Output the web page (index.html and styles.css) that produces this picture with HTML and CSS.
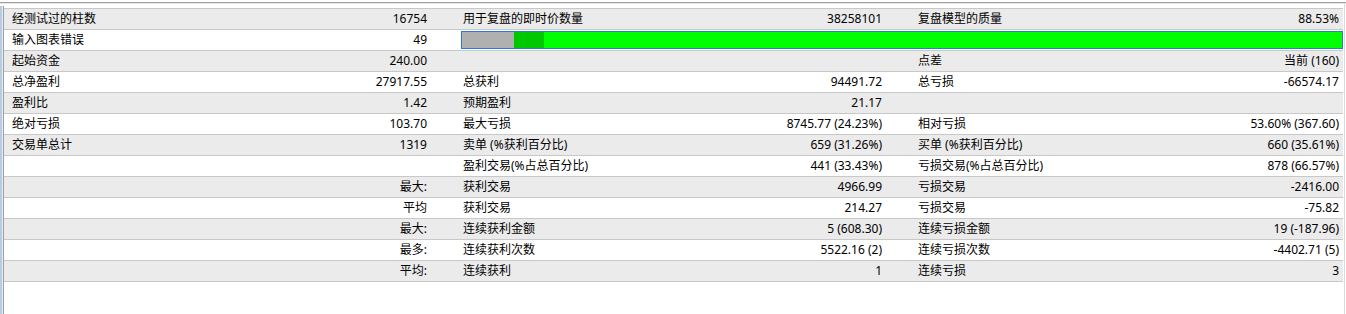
FILE: index.html
```html
<!DOCTYPE html>
<html lang="zh-CN">
<head>
<meta charset="utf-8">
<title>测试报告</title>
<link rel="stylesheet" href="styles.css">
</head>
<body>
<div class="top-rule"></div>
<div class="top-rule2"></div>
<div class="main">
  <div class="side"></div>
  <div class="content">
    <div class="report">
      <div class="row">
        <div class="lbl">经测试过的柱数</div><div class="val">16754</div>
        <div class="lbl mid">用于复盘的即时价数量</div><div class="val">38258101</div>
        <div class="lbl mid">复盘模型的质量</div><div class="val">88.53%</div>
      </div>
      <div class="row">
        <div class="lbl">输入图表错误</div><div class="val">49</div>
        <div class="barcell">
          <div class="bar"><div class="seg-gray"></div><div class="seg-dark"></div><div class="seg-bright"></div></div>
        </div>
      </div>
      <div class="row">
        <div class="lbl">起始资金</div><div class="val">240.00</div>
        <div class="lbl mid"></div><div class="val"></div>
        <div class="lbl mid">点差</div><div class="val">当前 (160)</div>
      </div>
      <div class="row">
        <div class="lbl">总净盈利</div><div class="val">27917.55</div>
        <div class="lbl mid">总获利</div><div class="val">94491.72</div>
        <div class="lbl mid">总亏损</div><div class="val">-66574.17</div>
      </div>
      <div class="row">
        <div class="lbl">盈利比</div><div class="val">1.42</div>
        <div class="lbl mid">预期盈利</div><div class="val">21.17</div>
        <div class="lbl mid"></div><div class="val"></div>
      </div>
      <div class="row">
        <div class="lbl">绝对亏损</div><div class="val">103.70</div>
        <div class="lbl mid">最大亏损</div><div class="val">8745.77 (24.23%)</div>
        <div class="lbl mid">相对亏损</div><div class="val">53.60% (367.60)</div>
      </div>
      <div class="row">
        <div class="lbl">交易单总计</div><div class="val">1319</div>
        <div class="lbl mid">卖单 (%获利百分比)</div><div class="val">659 (31.26%)</div>
        <div class="lbl mid">买单 (%获利百分比)</div><div class="val">660 (35.61%)</div>
      </div>
      <div class="row">
        <div class="lbl"></div><div class="val"></div>
        <div class="lbl mid">盈利交易(%占总百分比)</div><div class="val">441 (33.43%)</div>
        <div class="lbl mid">亏损交易(%占总百分比)</div><div class="val">878 (66.57%)</div>
      </div>
      <div class="row">
        <div class="lbl"></div><div class="val">最大:</div>
        <div class="lbl mid">获利交易</div><div class="val">4966.99</div>
        <div class="lbl mid">亏损交易</div><div class="val">-2416.00</div>
      </div>
      <div class="row">
        <div class="lbl"></div><div class="val">平均</div>
        <div class="lbl mid">获利交易</div><div class="val">214.27</div>
        <div class="lbl mid">亏损交易</div><div class="val">-75.82</div>
      </div>
      <div class="row">
        <div class="lbl"></div><div class="val">最大:</div>
        <div class="lbl mid">连续获利金额</div><div class="val">5 (608.30)</div>
        <div class="lbl mid">连续亏损金额</div><div class="val">19 (-187.96)</div>
      </div>
      <div class="row">
        <div class="lbl"></div><div class="val">最多:</div>
        <div class="lbl mid">连续获利次数</div><div class="val">5522.16 (2)</div>
        <div class="lbl mid">连续亏损次数</div><div class="val">-4402.71 (5)</div>
      </div>
      <div class="row">
        <div class="lbl"></div><div class="val">平均:</div>
        <div class="lbl mid">连续获利</div><div class="val">1</div>
        <div class="lbl mid">连续亏损</div><div class="val">3</div>
      </div>
    </div>
  </div>
</div>
</body>
</html>
```

FILE: styles.css
```css
html, body {
  margin: 0;
  padding: 0;
  background: #ffffff;
}
body {
  font-family: "Noto Sans", "Noto Sans CJK SC", sans-serif;
  font-size: 12px;
  color: #000000;
  height: 314px;
  overflow: hidden;
}
.top-rule {
  margin-top: 2px;
  height: 1px;
  background: #a0a0a0;
}
.top-rule2 {
  height: 1px;
  background: #e6e6e6;
}
.main {
  display: flex;
  height: 310px;
}
.side {
  width: 4px;
  margin-top: 2px;
  background: linear-gradient(90deg, #b8cce4 0 2px, #e4ebf3 2px 3px, #a0a0a0 3px 4px);
}
.content {
  width: 1340px;
  padding-top: 4px;
  border-right: 1px solid #dcdcdc;
}
.report {
  width: 1339px;
  border-top: 1px solid #c8c8c8;
}
.row {
  display: grid;
  grid-template-columns: 200px 227px 230px 225px 230px 227px;
  height: 20px;
  border-bottom: 1px solid #c8c8c8;
  line-height: 20px;
  white-space: nowrap;
}
.row:nth-child(odd) {
  background: #ebebeb;
}
.row:nth-child(even) {
  background: #ffffff;
}
.lbl {
  padding-left: 8px;
  text-align: left;
  overflow: hidden;
}
.lbl.mid {
  padding-left: 32px;
}
.val {
  padding-right: 4px;
  text-align: right;
}
.barcell {
  grid-column: 3 / 7;
  padding-left: 30px;
  padding-top: 1px;
}
.bar {
  display: flex;
  height: 16px;
  border: 1px solid #2f78d6;
  background: #00ff00;
}
.seg-gray {
  width: 52px;
  background: #b0b0b0;
}
.seg-dark {
  width: 30px;
  background: #00c800;
}
.seg-bright {
  flex: 1;
  background: #00ff00;
}
```
